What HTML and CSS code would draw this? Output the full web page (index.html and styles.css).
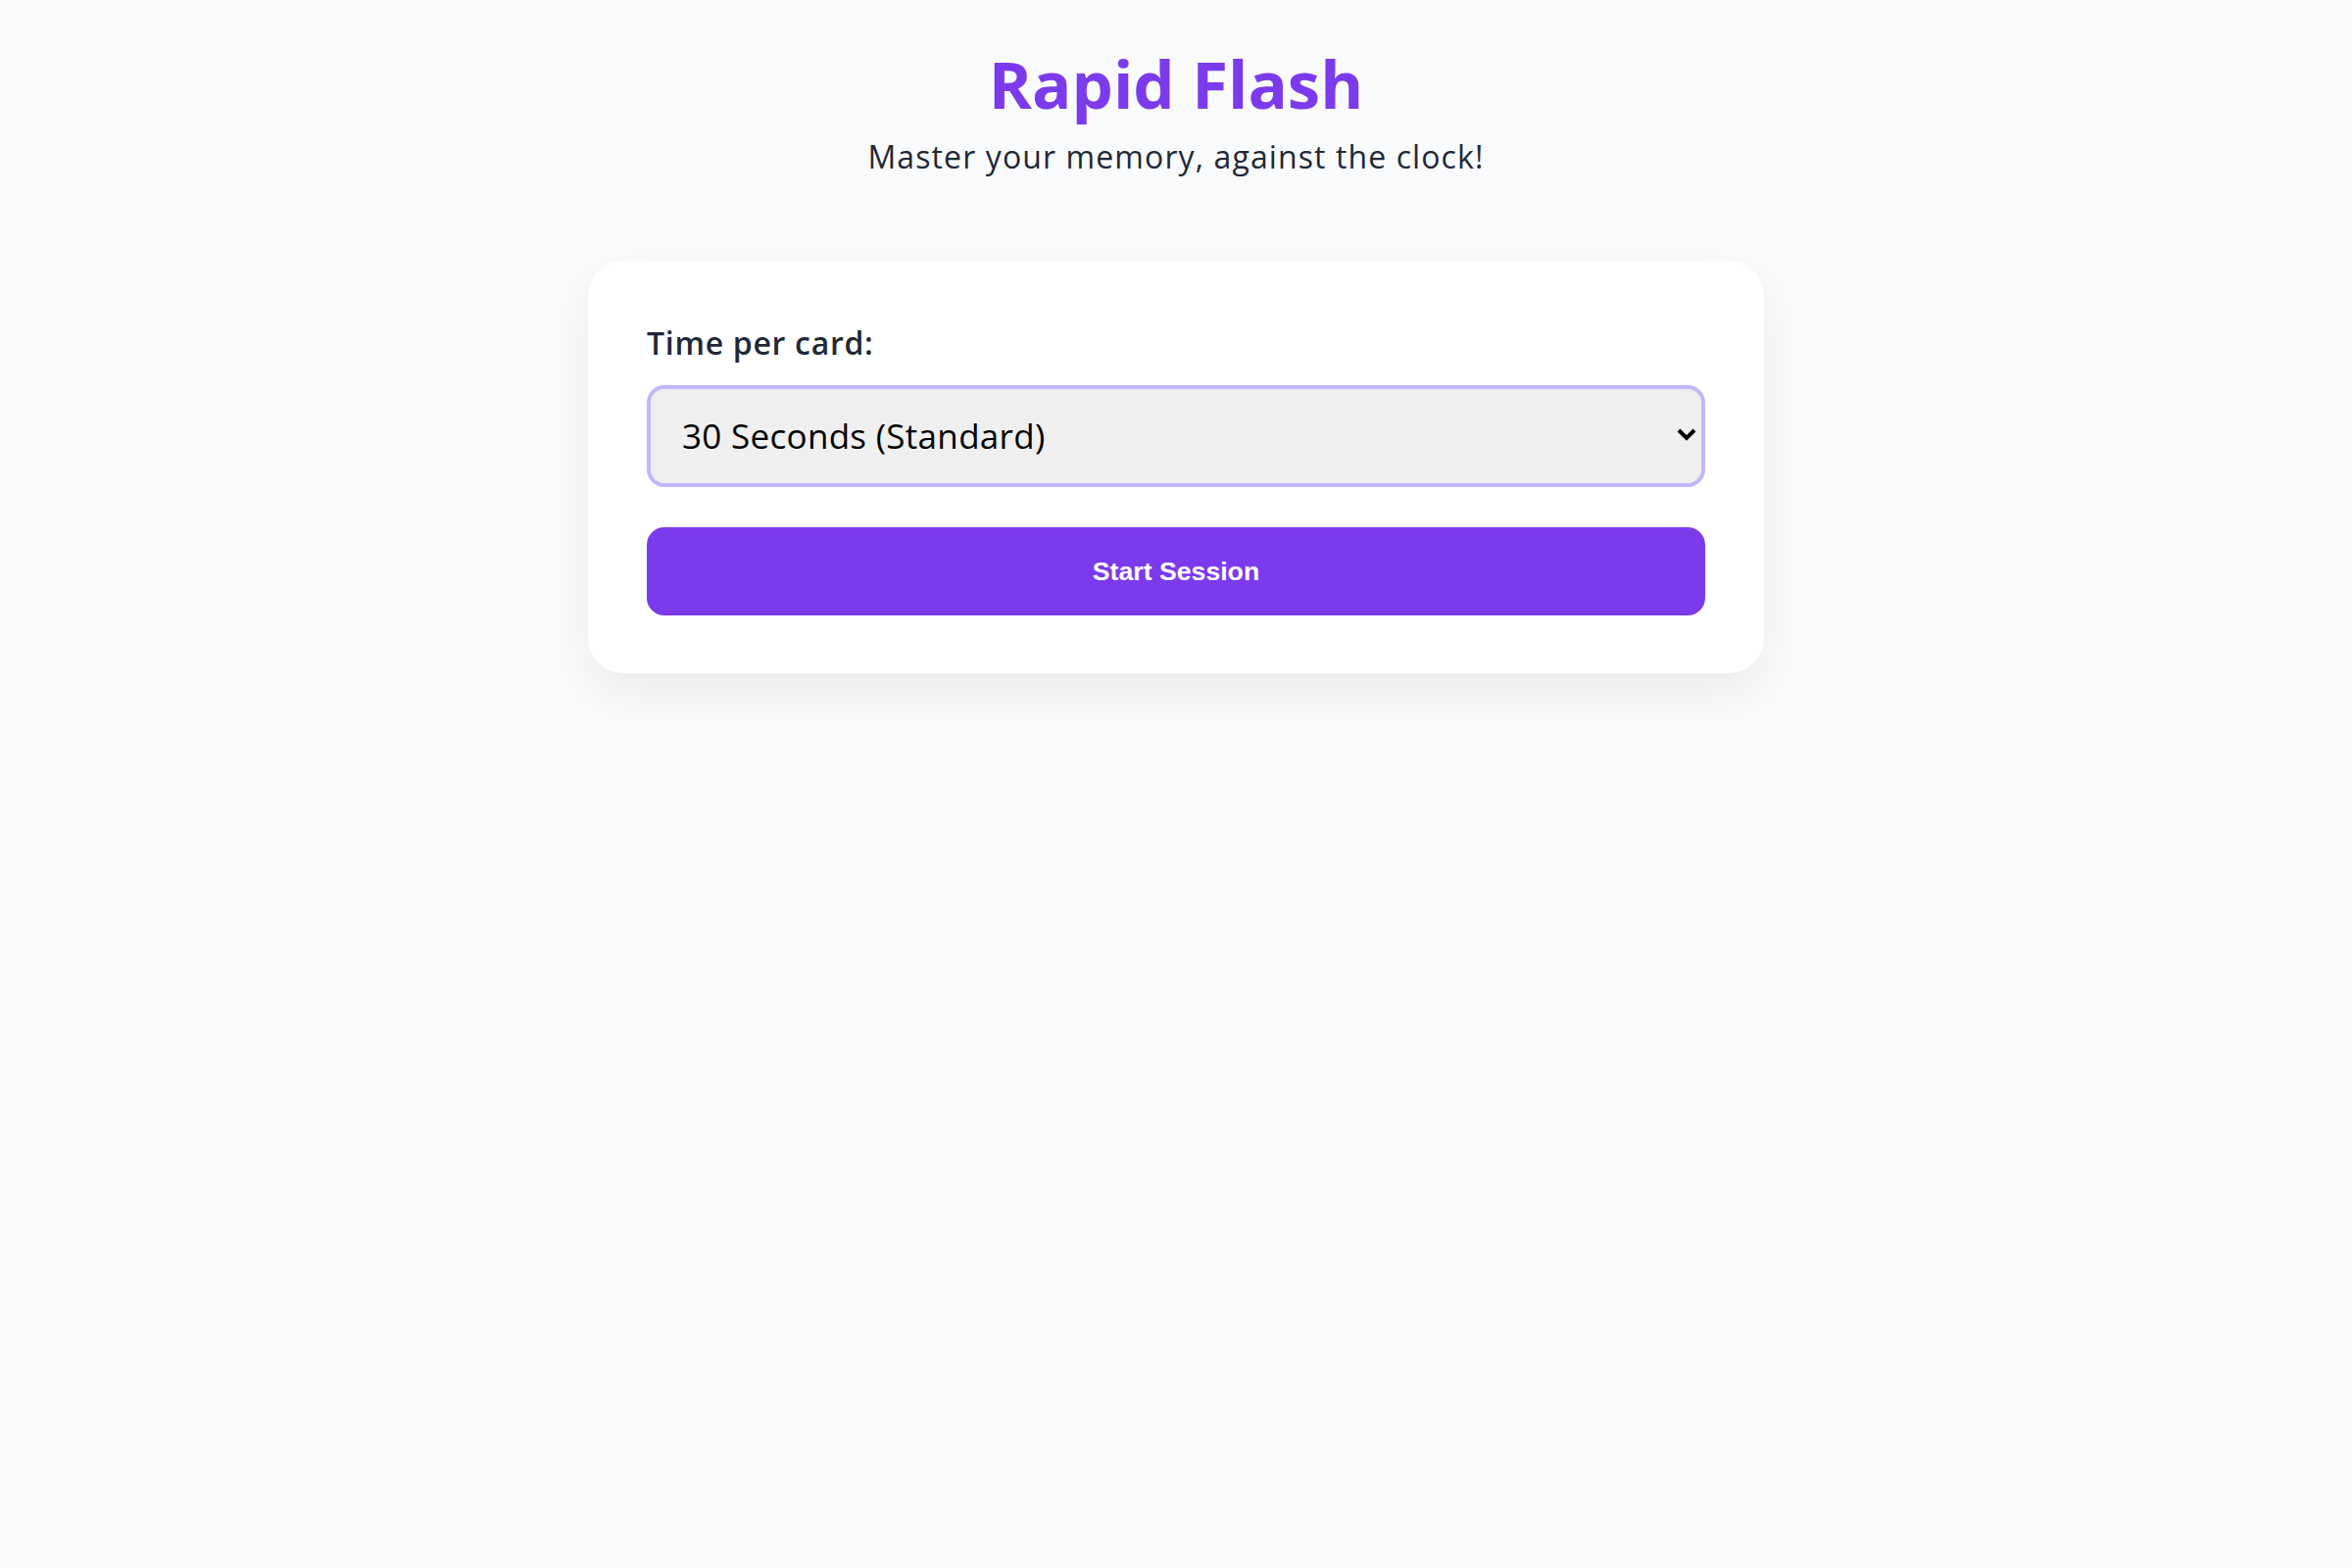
FILE: index.html
```html
<!DOCTYPE html>
<html lang="en">
<head>
<meta charset="utf-8">
<title>Rapid Flash</title>
<link rel="stylesheet" href="styles.css">
</head>
<body>
<header class="header">
  <h1 class="title">Rapid Flash</h1>
  <p class="subtitle">Master your memory, against the clock!</p>
</header>
<main class="card">
  <label class="label" for="time">Time per card:</label>
  <div class="select-wrap">
    <select id="time" class="select">
      <option>15 Seconds (Fast)</option>
      <option selected>30 Seconds (Standard)</option>
      <option>60 Seconds (Relaxed)</option>
    </select>
    <svg class="chevron" width="20" height="14" viewBox="0 0 20 14" aria-hidden="true">
      <path d="M2 3 L10 11 L18 3" fill="none" stroke="#000" stroke-width="4"/>
    </svg>
  </div>
  <button class="start" type="button">Start Session</button>
</main>
</body>
</html>
```

FILE: styles.css
```css
* { box-sizing: border-box; }

body {
  margin: 0;
  min-height: 100vh;
  background: #f9fafb;
  font-family: "Open Sans", "Noto Sans", sans-serif;
  color: #1f2937;
}

.header {
  text-align: center;
  padding-top: 45px;
}

.title {
  margin: 0;
  font-size: 67px;
  line-height: 80px;
  font-weight: 700;
  color: #7c3aed;
}

.subtitle {
  margin: 11px 0 0;
  font-size: 32px;
  line-height: 48px;
  letter-spacing: 1.1px;
  color: #1f2937;
}

.card {
  width: 1200px;
  margin: 82px auto 0;
  background: #ffffff;
  border-radius: 36px;
  padding: 60px 60px 59px;
  box-shadow: 0 20px 50px rgba(17, 24, 39, 0.06);
}

.label {
  display: block;
  font-size: 32px;
  line-height: 48px;
  font-weight: 600;
  letter-spacing: 0.7px;
  color: #1f2937;
  margin-bottom: 19px;
}

.select-wrap {
  position: relative;
}

.select {
  display: block;
  width: 100%;
  height: 104px;
  appearance: none;
  -webkit-appearance: none;
  background: #efefef;
  border: 4px solid #c4b5fd;
  border-radius: 18px;
  padding: 0 60px 2px 32px;
  font-family: "Open Sans", "Noto Sans", sans-serif;
  font-size: 35px;
  letter-spacing: 0.3px;
  color: #000;
  outline: none;
}

.chevron {
  position: absolute;
  right: 9px;
  top: 43px;
  width: 20px;
  height: 14px;
  pointer-events: none;
}

.start {
  display: block;
  width: 100%;
  height: 90px;
  margin-top: 41px;
  background: #7c3aed;
  color: #ffffff;
  border: none;
  border-radius: 18px;
  font-family: "Liberation Sans", Arial, sans-serif;
  font-weight: 700;
  font-size: 26.67px;
  cursor: pointer;
}
```
